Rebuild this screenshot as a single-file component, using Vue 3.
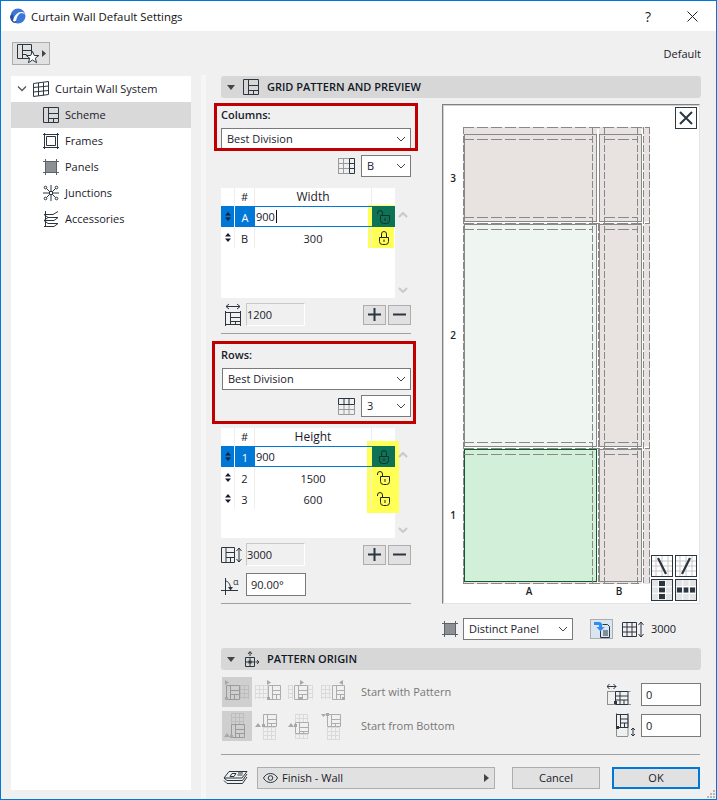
<script setup>
const columns = [
  { id: 'A', value: '900', active: true, locked: false },
  { id: 'B', value: '300', active: false, locked: true },
]
const rows = [
  { id: '1', value: '900', active: true, locked: true },
  { id: '2', value: '1500', active: false, locked: false },
  { id: '3', value: '600', active: false, locked: false },
]
const tree = [
  { name: 'Scheme', icon: 'scheme', active: true },
  { name: 'Frames', icon: 'frames' },
  { name: 'Panels', icon: 'panels' },
  { name: 'Junctions', icon: 'junctions' },
  { name: 'Accessories', icon: 'accessories' },
]

// scheme block drawn in the origin buttons
const schemePath = ([x, y, w, h]) => {
  const a = x + 0.5
  const b = y + 0.5
  return `M${a} ${b}h${w}v${h}h${-w}zM${a + 4} ${b}v${h}M${a + 4} ${b + 5}h${w - 4}M${a + 4} ${b + 9}h${w - 4}M${a + 8} ${b + 9}v${h - 9}`
}
const latticePath = (parts) => parts.map(([x, y, w, h]) => {
  let d = ''
  for (let i = 0; i <= w; i += 4) d += `M${x + i + 0.5} ${y}v${h}`
  for (let j = 0; j <= h; j += 4) d += `M${x} ${y + j + 0.5}h${w}`
  return d
}).join('')

const originTop = [
  { scheme: [4, 8, 13, 14], lattice: [[18, 8, 8, 14]], tri: 'M3 3l4 2.500L3 8z', dot: [3, 20], pressed: true },
  { scheme: [13, 8, 12, 14], lattice: [[0, 8, 12, 14]], tri: 'M12 3l4 2.500L12 8z', dot: [12, 20] },
  { scheme: [6, 8, 13, 14], lattice: [[0, 8, 5, 14], [20, 8, 4, 14]], tri: 'M12 3l4 2.500L12 8z', dot: [11, 20] },
  { scheme: [11, 8, 12, 14], lattice: [[0, 8, 10, 14]], tri: 'M22 3l-4 2.500L22 8z', dot: [21, 20] },
]
const originBottom = [
  { scheme: [9, 13, 13, 13], lattice: [[9, 2, 13, 11]], tri: 'M2 26l3-4 3 4z', dot: [8, 24], pressed: true },
  { scheme: [8, 3, 13, 12], lattice: [[8, 16, 13, 12]], tri: 'M0 16l3-4 3 4z', dot: [7, 13] },
  { scheme: [7, 11, 13, 11], lattice: [[7, 3, 13, 8], [7, 23, 13, 5]], tri: 'M0 16l3-4 3 4z', dot: [6, 13] },
  { scheme: [6, 3, 13, 12], lattice: [[6, 16, 13, 12]], tri: 'M0 3h5L2.500 6z', dot: [5, 2] },
]
</script>

<template>
  <div class="window">
    <div class="titlebar">
      <svg class="logo" width="16" height="16" viewBox="0 0 16 16">
        <circle cx="8" cy="8" r="7.500" fill="#3d76d6" />
        <path d="M0 8a8 8 0 004 7l3-1C4 12 3 10 3 6z" fill="#26509c" />
        <path d="M3 13C4 7 8 3.500 12 4c1.500.2 2.500 1.200 3 2.500-1-1-2-1.500-3-1.500-3 0-5 3-6 8-1 .6-2 .5-3 0z" fill="#fff" />
      </svg>
      <span class="title">Curtain Wall Default Settings</span>
      <span class="help">?</span>
      <svg class="close" width="11" height="11" viewBox="0 0 11 11">
        <path d="M.5.500l10 10M10.500.500l-10 10" stroke="#222" fill="none" />
      </svg>
    </div>

    <div class="toolbar">
      <button class="favorite">
        <svg width="36" height="21" viewBox="0 0 36 21">
          <path d="M4.500 1.500h14v14h-14zM9.500 1.500v14M9.500 7.500h9M9.500 11.500h4" fill="none" stroke="#2b3640" />
          <path d="M19.500 8.500l1.800 4h4.500l-3.500 2.700 1.300 4.500-4.100-2.700-4.100 2.700 1.300-4.500-3.500-2.700h4.500z" fill="#fff" stroke="#2b3640" />
          <path d="M29 7l4 3.500-4 3.500z" fill="#444" />
        </svg>
      </button>
      <span class="default">Default</span>
    </div>

    <div class="content">
      <aside class="tree">
        <div class="tree-root">
          <svg width="12" height="8" viewBox="0 0 12 8"><path d="M2 1.500l4 4 4-4" fill="none" stroke="#555" stroke-width="1.300" /></svg>
          <svg width="16" height="16" viewBox="0 0 16 16">
            <path d="M.5 2.500l15-2v13l-15 2zM.5 6.500l15-1.500M.5 11l15-1.500M5.500 2v13M10.500 1.500v13" fill="none" stroke="#2b3640" />
          </svg>
          <span>Curtain Wall System</span>
        </div>
        <div v-for="item in tree" :key="item.name" class="tree-item" :class="{ active: item.active }">
          <svg width="16" height="16" viewBox="0 0 16 16">
            <g v-if="item.icon === 'scheme'" fill="none" stroke="#2b3640">
              <path d="M.5.500h15v15H.5zM5.500.500v15M5.500 6.500h10M5.500 11.500h10M10.500 11.500v4" />
            </g>
            <g v-else-if="item.icon === 'frames'" fill="none" stroke="#2b3640">
              <path d="M1.500 1.500h13v13h-13zM3.500 3.500h9v9h-9zM1.500 0v16M14.500 0v16M0 1.500h16M0 14.500h16" />
            </g>
            <g v-else-if="item.icon === 'panels'">
              <path d="M2.500 2.500h11v11h-11z" fill="#8d9196" stroke="#2b3640" />
              <path d="M2.500 0v16M13.500 0v16M0 2.500h16M0 13.500h16" fill="none" stroke="#5b6269" />
            </g>
            <g v-else-if="item.icon === 'junctions'" fill="none" stroke="#2b3640">
              <path d="M6.500 6.500h3v3h-3zM0 8h6.500M9.500 8H16M8 0v6.500M8 9.500V16M3.500 3.500l3 3M12.500 3.500l-3 3M3.500 12.500l3-3M12.500 12.500l-3-3" />
              <circle cx="2.500" cy="2.500" r="1.300" /><circle cx="13.500" cy="2.500" r="1.300" />
              <circle cx="2.500" cy="13.500" r="1.300" /><circle cx="13.500" cy="13.500" r="1.300" />
            </g>
            <g v-else fill="none" stroke="#2b3640">
              <path d="M1 3.500h9l5-3M1 3.500l4 3h10M5 6.500L1 9.500h10l4-3M1 9.500l4 3h10L11 15.500H1M2.500 0v16" />
            </g>
          </svg>
          <span>{{ item.name }}</span>
        </div>
      </aside>

      <div class="splitter"></div>

      <main class="main">
        <div class="section-head">
          <svg class="caret" width="8" height="5" viewBox="0 0 8 5"><path d="M0 0h8L4 5z" fill="#444" /></svg>
          <svg width="16" height="16" viewBox="0 0 16 16">
            <path d="M.5.500h15v15H.5zM5.500.500v15M5.500 6.500h10M5.500 11.500h10M10.500 11.500v4" fill="none" stroke="#2b3640" />
          </svg>
          <span>GRID PATTERN AND PREVIEW</span>
        </div>

        <div class="grid-area">
          <div class="controls">
            <div class="group columns-group">
              <div class="red-box red-columns"></div>
              <label class="field-label">Columns:</label>
              <div class="select wide"><span>Best Division</span><svg width="10" height="6" viewBox="0 0 10 6"><path d="M1 1l4 4 4-4" fill="none" stroke="#444" /></svg></div>
              <div class="sub-select">
                <svg width="17" height="16" viewBox="0 0 17 16">
                  <path d="M0 .5h11M0 5.500h11M0 10.500h11M0 15.500h11M.5 0v16M5.500 0v16" fill="none" stroke="#9a9a9a" />
                  <path d="M11.500.500h5v15h-5zM11.500 5.500h5M11.500 10.500h5" fill="none" stroke="#2b3640" />
                </svg>
                <div class="select small"><span>B</span><svg width="10" height="6" viewBox="0 0 10 6"><path d="M1 1l4 4 4-4" fill="none" stroke="#444" /></svg></div>
              </div>
            </div>

            <div class="table-row">
              <div class="highlight hl-columns"></div>
              <div class="table">
                <div class="thead">
                  <div class="c-handle"></div>
                  <div class="c-id">#</div>
                  <div class="c-value head-value">Width</div>
                  <div class="c-lock"></div>
                </div>
                <div v-for="c in columns" :key="c.id" class="trow" :class="{ active: c.active }">
                  <div class="c-handle"><svg width="6" height="9" viewBox="0 0 6 9"><path d="M3 0l3 3.500H0zM3 9L0 5.500h6z" fill="currentColor" /></svg></div>
                  <div class="c-id">{{ c.id }}</div>
                  <div class="c-value"><span>{{ c.value }}</span><i v-if="c.active" class="cursor"></i></div>
                  <div class="c-lock">
                    <svg v-if="c.locked" width="12" height="14" viewBox="0 0 12 14" fill="none" stroke="currentColor">
                      <path d="M3.500 6V3a2.500 2.500 0 015 0v3M1.500 6.500h9v4a3 3 0 01-3 3h-3a3 3 0 01-3-3zM6 8.500V11" />
                    </svg>
                    <svg v-else width="13" height="14" viewBox="0 0 13 14" fill="none" stroke="currentColor">
                      <path d="M.5 4V3a2.500 2.500 0 015 0v2.500M3.500 5.500h9v5a3 3 0 01-3 3h-3a3 3 0 01-3-3zM8 8v3" />
                    </svg>
                  </div>
                </div>
              </div>
              <div class="scroller">
                <svg width="10" height="6" viewBox="0 0 10 6"><path d="M1 5l4-4 4 4" fill="none" stroke="#c9c9c9" stroke-width="2" /></svg>
                <svg width="10" height="6" viewBox="0 0 10 6"><path d="M1 1l4 4 4-4" fill="none" stroke="#c9c9c9" stroke-width="2" /></svg>
              </div>
            </div>

            <div class="total-row">
              <svg class="total-icon" width="16" height="23" viewBox="0 0 16 23">
                <path d="M1 3.500h14M4 1L1 3.500 4 6M12 1l3 2.500L12 6" fill="none" stroke="#2b3640" />
                <path d="M.5 8v15M15.500 8v15M.5 9.500h15M.5 21.500h15M5.500 9.500v12M5.500 14.500h10M5.500 18.500h10M10.500 18.500v3" fill="none" stroke="#2b3640" />
              </svg>
              <div class="readonly">1200</div>
              <div class="buttons">
                <button class="pm"><svg width="13" height="13" viewBox="0 0 13 13"><path d="M6.500 0v13M0 6.500h13" stroke="#2b3640" stroke-width="2" /></svg></button>
                <button class="pm"><svg width="13" height="13" viewBox="0 0 13 13"><path d="M0 6.500h13" stroke="#2b3640" stroke-width="2" /></svg></button>
              </div>
            </div>

            <hr class="divider" />

            <div class="group rows-group">
              <div class="red-box red-rows"></div>
              <label class="field-label">Rows:</label>
              <div class="select wide"><span>Best Division</span><svg width="10" height="6" viewBox="0 0 10 6"><path d="M1 1l4 4 4-4" fill="none" stroke="#444" /></svg></div>
              <div class="sub-select">
                <svg width="17" height="17" viewBox="0 0 17 17">
                  <path d="M.5 6.500v-6h16v6M.5 6.500h16M6 .5v6M11 .5v6" fill="none" stroke="#2b3640" />
                  <path d="M.5 7v9.500h16V7M.5 11.500h16M6 7v9.500M11 7v9.500" fill="none" stroke="#9a9a9a" />
                </svg>
                <div class="select small"><span>3</span><svg width="10" height="6" viewBox="0 0 10 6"><path d="M1 1l4 4 4-4" fill="none" stroke="#444" /></svg></div>
              </div>
            </div>

            <div class="table-row">
              <div class="highlight hl-rows"></div>
              <div class="table">
                <div class="thead">
                  <div class="c-handle"></div>
                  <div class="c-id">#</div>
                  <div class="c-value head-value">Height</div>
                  <div class="c-lock"></div>
                </div>
                <div v-for="r in rows" :key="r.id" class="trow" :class="{ active: r.active }">
                  <div class="c-handle"><svg width="6" height="9" viewBox="0 0 6 9"><path d="M3 0l3 3.500H0zM3 9L0 5.500h6z" fill="currentColor" /></svg></div>
                  <div class="c-id">{{ r.id }}</div>
                  <div class="c-value"><span>{{ r.value }}</span></div>
                  <div class="c-lock">
                    <svg v-if="r.locked" width="12" height="14" viewBox="0 0 12 14" fill="none" stroke="currentColor">
                      <path d="M3.500 6V3a2.500 2.500 0 015 0v3M1.500 6.500h9v4a3 3 0 01-3 3h-3a3 3 0 01-3-3zM6 8.500V11" />
                    </svg>
                    <svg v-else width="13" height="14" viewBox="0 0 13 14" fill="none" stroke="currentColor">
                      <path d="M.5 4V3a2.500 2.500 0 015 0v2.500M3.500 5.500h9v5a3 3 0 01-3 3h-3a3 3 0 01-3-3zM8 8v3" />
                    </svg>
                  </div>
                </div>
              </div>
              <div class="scroller">
                <svg width="10" height="6" viewBox="0 0 10 6"><path d="M1 5l4-4 4 4" fill="none" stroke="#c9c9c9" stroke-width="2" /></svg>
                <svg width="10" height="6" viewBox="0 0 10 6"><path d="M1 1l4 4 4-4" fill="none" stroke="#c9c9c9" stroke-width="2" /></svg>
              </div>
            </div>

            <div class="total-row total-height">
              <svg class="total-icon wide-icon" width="21" height="18" viewBox="0 0 21 18">
                <path d="M.5 1.500h13v15H.5zM5 1.500v15M5 6.500h8.500M5 11.500h8.500M9.500 11.500v5" fill="none" stroke="#2b3640" />
                <path d="M18 2v14M15.500 5L18 2l2.500 3M15.500 13l2.500 3 2.500-3" fill="none" stroke="#2b3640" />
              </svg>
              <div class="readonly">3000</div>
              <div class="buttons">
                <button class="pm"><svg width="13" height="13" viewBox="0 0 13 13"><path d="M6.500 0v13M0 6.500h13" stroke="#2b3640" stroke-width="2" /></svg></button>
                <button class="pm"><svg width="13" height="13" viewBox="0 0 13 13"><path d="M0 6.500h13" stroke="#2b3640" stroke-width="2" /></svg></button>
              </div>
            </div>

            <div class="angle-row">
              <svg class="total-icon wide-icon" width="21" height="20" viewBox="0 0 21 20">
                <path d="M0 15.500h17M4.500 3v17M4.500 6c3.500.5 5 4 5 8" fill="none" stroke="#2b3640" />
                <path d="M7 12l2.500 3.500L12 12z" fill="#2b3640" />
                <text x="12" y="10" class="alpha">α</text>
              </svg>
              <div class="angle-input">90.00°</div>
            </div>

            <hr class="divider" />
          </div>

          <div class="preview-col">
            <div class="preview">
              <svg class="drawing" width="256" height="498" viewBox="0 0 256 498">
                <!-- drawing coordinates are page px minus 443,105 -->
                <rect x="20" y="22" width="187" height="457" fill="#e8e2e0" />
                <path d="M155 24v455M199.500 24v455M20 117.500h187M20 342.500h187" stroke="#fff" stroke-width="2" fill="none" />
                <rect x="21.500" y="29.500" width="132" height="87" fill="#e8e2e0" stroke="#888" />
                <rect x="156.500" y="29.500" width="42" height="87" fill="#e8e2e0" stroke="#888" />
                <rect x="21.500" y="119.500" width="132" height="222" fill="#eff5f1" stroke="#888" />
                <rect x="156.500" y="119.500" width="42" height="222" fill="#e8e2e0" stroke="#888" />
                <rect x="21.500" y="344.500" width="132" height="132" fill="#d2efd9" stroke="#17582f" />
                <rect x="156.500" y="344.500" width="42" height="132" fill="#e8e2e0" stroke="#888" />
                <path d="M200.500 22v456M206.500 22v456M20.500 22v456M149.500 22v456M155.500 119v359M161.500 22v456M194.500 22v456" fill="none" stroke="#888" stroke-dasharray="7 2" />
                <path d="M20 22.500h187M20 34.500h130M161 34.500h34M20 112.500h130M161 112.500h34M20 124.500h130M161 124.500h34M20 337.500h130M161 337.500h34M20 349.500h130M161 349.500h34M20 478.500h130M146 478.500h50M20 118.500h187M20 343.500h187" fill="none" stroke="#888" stroke-dasharray="11 3" />
                <text x="10" y="77" class="axis">3</text>
                <text x="10" y="234" class="axis">2</text>
                <text x="10" y="414" class="axis">1</text>
                <text x="86" y="490" class="axis">A</text>
                <text x="176" y="490" class="axis">B</text>
              </svg>

              <button class="preview-close">
                <svg width="16" height="16" viewBox="0 0 16 16"><path d="M2 2l12 12M14 2L2 14" stroke="#2b3640" stroke-width="2" /></svg>
              </button>
              <div class="preview-tools">
                <button class="tool">
                  <svg width="20" height="20" viewBox="0 0 20 20">
                    <path d="M4 0v20M10 0v20M16 0v20M0 5h20M0 10h20M0 15h20" stroke="#c9c9c9" />
                    <path d="M6 2l8 16" stroke="#2b3640" stroke-width="2.200" />
                  </svg>
                </button>
                <button class="tool">
                  <svg width="20" height="20" viewBox="0 0 20 20">
                    <path d="M4 0v20M10 0v20M16 0v20M0 5h20M0 10h20M0 15h20" stroke="#c9c9c9" />
                    <path d="M14 2L6 18" stroke="#2b3640" stroke-width="2.200" />
                  </svg>
                </button>
                <button class="tool">
                  <svg width="20" height="20" viewBox="0 0 20 20">
                    <rect width="20" height="20" fill="#e2e4e5" />
                    <path d="M7 1h6v5H7zM7 7.500h6v5H7zM7 14h6v5H7z" fill="#2b3640" />
                    <path d="M6.500 0v20M13.500 0v20M0 6.800h20M0 13.200h20" stroke="#fff" />
                  </svg>
                </button>
                <button class="tool">
                  <svg width="20" height="20" viewBox="0 0 20 20">
                    <rect width="20" height="20" fill="#e2e4e5" />
                    <path d="M1 7.500h5v5H1zM7.500 7.500h5v5h-5zM14 7.500h5v5h-5z" fill="#2b3640" />
                    <path d="M6.800 0v20M13.200 0v20M0 6.500h20M0 13.500h20" stroke="#fff" />
                  </svg>
                </button>
              </div>
            </div>

            <div class="preview-foot">
              <svg width="16" height="16" viewBox="0 0 16 16">
                <path d="M2.500 2.500h11v11h-11z" fill="#8d9196" stroke="#2b3640" />
                <path d="M2.500 0v16M13.500 0v16M0 2.500h16M0 13.500h16" fill="none" stroke="#5b6269" />
              </svg>
              <div class="select panel-select"><span>Distinct Panel</span><svg width="10" height="6" viewBox="0 0 10 6"><path d="M1 1l4 4 4-4" fill="none" stroke="#444" /></svg></div>
              <button class="pressed">
                <svg width="18" height="17" viewBox="0 0 18 17">
                  <path d="M9.500 3.500h5l2 2v11h-9V9M10 10h5M10 12h5M10 14h5" fill="none" stroke="#2b3640" />
                  <path d="M1 1h5c2 0 3 1 3 3v2h2.500l-4 4.500-4-4.500H6V4.500c0-.3-.2-.5-.5-.5H1z" fill="#2f8cf0" />
                </svg>
              </button>
              <svg class="foot-grid" width="27" height="17" viewBox="0 0 27 17">
                <path d="M.5 1.500h14v14H.5zM5 1.500v14M10 1.500v14M.5 6h14M.5 11h14M19 1v15M16.500 4L19 1l2.500 3M16.500 13l2.500 3 2.500-3" fill="none" stroke="#2b3640" />
              </svg>
              <span class="foot-value">3000</span>
            </div>
          </div>
        </div>

        <div class="section-head second">
          <svg class="caret" width="8" height="5" viewBox="0 0 8 5"><path d="M0 0h8L4 5z" fill="#444" /></svg>
          <svg width="16" height="16" viewBox="0 0 16 16">
            <path d="M2.500 6.500h9v9h-9zM7 6.500v9M2.500 11h9M7 5V1M5 3l2-2.500L9 3M12.500 11H16M14 9l2 2-2 2" fill="none" stroke="#2b3640" />
            <rect x="5.500" y="9.500" width="3" height="3" fill="#2b3640" />
          </svg>
          <span>PATTERN ORIGIN</span>
        </div>

        <div class="origin">
          <div class="origin-lines">
            <div class="origin-row">
              <div v-for="(b, i) in originTop" :key="i" class="origin-btn" :class="{ pressed: b.pressed }">
                <svg width="30" height="30" viewBox="0 0 30 30" fill="none">
                  <path :d="latticePath(b.lattice)" class="lat" />
                  <path :d="schemePath(b.scheme)" class="sch" />
                  <path :d="b.tri" class="mark" />
                  <rect :x="b.dot[0]" :y="b.dot[1]" width="3" height="3" class="mark" />
                </svg>
              </div>
              <span class="origin-label">Start with Pattern</span>
            </div>
            <div class="origin-row">
              <div v-for="(b, i) in originBottom" :key="i" class="origin-btn" :class="{ pressed: b.pressed }">
                <svg width="30" height="30" viewBox="0 0 30 30" fill="none">
                  <path :d="latticePath(b.lattice)" class="lat" />
                  <path :d="schemePath(b.scheme)" class="sch" />
                  <path :d="b.tri" class="mark" />
                  <rect :x="b.dot[0]" :y="b.dot[1]" width="3" height="3" class="mark" />
                </svg>
              </div>
              <span class="origin-label">Start from Bottom</span>
            </div>
          </div>
          <div class="origin-fields">
            <div class="origin-field">
              <svg class="of-one" width="24" height="21" viewBox="0 0 24 21">
                <path d="M0 2.500h9M2.500 0L0 2.500 2.500 5M6.500 0L9 2.500 6.500 5" fill="none" stroke="#2b3640" />
                <path d="M.5 7v14M.5 7.500h8M.5 20.500h8M23.500 7.500H21M21 20.500h3" fill="none" stroke="#8a8f94" />
                <path d="M8.500 7.500h12.500v13H8.500zM8.500 12h12.500M8.500 16h12.500M13 7.500v13M17 16v4.500" fill="none" stroke="#2b3640" />
                <rect x="7" y="17" width="3" height="3" fill="#2b3640" />
              </svg>
              <div class="num-input">0</div>
            </div>
            <div class="origin-field">
              <svg class="of-two" width="21" height="24" viewBox="0 0 21 24">
                <path d="M.5 0v23M12 0v23M.5 23.500H12" fill="none" stroke="#8a8f94" />
                <path d="M.5 1.500H12v13H.5zM4.500 1.500v13M4.500 6H12M4.500 10H12M8.500 10v4.500" fill="none" stroke="#2b3640" />
                <rect x="0" y="13" width="3" height="3" fill="#2b3640" />
                <path d="M17 15v8M15 17l2-2 2 2M15 21l2 2 2-2" fill="none" stroke="#2b3640" />
              </svg>
              <div class="num-input">0</div>
            </div>
          </div>
        </div>

        <hr class="divider full" />

        <div class="footer">
          <svg width="25" height="14" viewBox="0 0 25 14">
            <path d="M6 .500h18L19 7H1zM1 7l3 2.500h15.500L24 3M1 9.500l3 3h15.500L24 6M9 2.500h4l-2 3H7zM15 2h5M14.500 4h5" fill="none" stroke="#2b3640" />
          </svg>
          <div class="layer">
            <svg width="15" height="10" viewBox="0 0 15 10">
              <path d="M.5 5c1.500-3 4-4.500 7-4.500s5.500 1.500 7 4.500c-1.500 3-4 4.500-7 4.500S2 8 .5 5z" fill="none" stroke="#2b3640" />
              <circle cx="7.500" cy="5" r="2.300" fill="none" stroke="#2b3640" />
            </svg>
            <span>Finish - Wall</span>
            <svg class="layer-arrow" width="5" height="8" viewBox="0 0 5 8"><path d="M0 0l5 4-5 4z" fill="#444" /></svg>
          </div>
          <button class="action">Cancel</button>
          <button class="action ok">OK</button>
        </div>
      </main>
    </div>
    <svg class="grip" width="10" height="10" viewBox="0 0 10 10">
      <path d="M7 1h2v2H7zM4 4h2v2H4zM7 4h2v2H7zM1 7h2v2H1zM4 7h2v2H4zM7 7h2v2H7z" fill="#b8b8b8" />
    </svg>
  </div>
</template>

<style>
html, body { margin: 0; padding: 0; background: #f0f0f0; }
</style>

<style scoped>
.window {
  position: relative;
  width: 717px;
  height: 800px;
  box-sizing: border-box;
  border: 1px solid #0078d7;
  background: #f0f0f0;
  font-family: "Open Sans", "Noto Sans", sans-serif;
  font-size: 11px;
  color: #1a1a2a;
  overflow: hidden;
}
button { font: inherit; color: inherit; padding: 0; margin: 0; }
svg { display: block; flex: none; }

.titlebar {
  display: flex;
  align-items: center;
  height: 30px;
  background: #fff;
  padding-left: 9px;
}
.title { margin-left: 5px; font-size: 11.400px; flex: 1; color: #111; }
.help { font-size: 14px; margin-right: 36px; color: #222; }
.close { margin-right: 18px; }

.toolbar {
  display: flex;
  align-items: center;
  justify-content: space-between;
  padding: 11px 15px 0 11px;
  height: 23px;
}
.favorite {
  width: 38px;
  height: 23px;
  border: 1px solid #adadad;
  background: #e1e1e1;
  display: flex;
  align-items: center;
  justify-content: center;
}

.content {
  display: flex;
  margin-top: 11px;
  padding-left: 10px;
}
.tree {
  width: 180px;
  height: 714px;
  background: #fff;
  flex: none;
}
.splitter {
  width: 5px;
  height: 724px;
  margin: -1px 0 0 10px;
  background: #f6f6f6;
  flex: none;
}
.tree-root, .tree-item {
  display: flex;
  align-items: center;
  height: 26px;
  padding-bottom: 2px;
  box-sizing: border-box;
}
.tree-root { padding-left: 5px; gap: 5px; }
.tree-root span { margin-left: 1px; }
.tree-item { padding-left: 32px; gap: 6px; }
.tree-item svg { margin-top: 2px; }
.tree-root svg { margin-top: 2px; }
.tree-item.active { background: #d9d9d9; }

.main {
  width: 480px;
  margin-left: 15px;
}
.section-head {
  display: flex;
  align-items: center;
  height: 22px;
  box-sizing: border-box;
  padding: 0 0 2px 6px;
  background: #d7d7d7;
  border-radius: 3px;
  font-weight: 600;
  font-size: 11px;
  color: #111827;
}
.section-head svg { margin-top: 2px; }
.section-head .caret { margin-right: 8px; }
.section-head span { margin-left: 8px; }

.grid-area {
  display: flex;
  margin-top: 6px;
}
.controls { width: 190px; flex: none; }
.group { position: relative; }
.red-box {
  position: absolute;
  border: 3px solid #c00000;
  box-sizing: border-box;
  width: 204px;
  pointer-events: none;
  z-index: 2;
}
.red-columns { left: -7px; top: -1px; height: 48px; }
.red-rows { left: -9px; top: -1px; height: 83px; }
.field-label { display: block; height: 24px; padding-top: 3px; box-sizing: border-box; font-weight: 600; line-height: 16px; }
.rows-group .field-label { height: 26px; padding-top: 5px; }
.columns-group { height: 84px; }
.rows-group { height: 86px; margin-top: 8px; }
.select {
  display: flex;
  align-items: center;
  justify-content: space-between;
  box-sizing: border-box;
  height: 22px;
  border: 1px solid #7a7a7a;
  background: #fff;
  padding: 0 4px 2px 5px;
}
.select svg { margin-top: 2px; }
.wide { width: 190px; }
.rows-group .wide { width: 189px; margin-left: 1px; }
.small { width: 50px; }
.sub-select {
  display: flex;
  align-items: center;
  justify-content: flex-end;
  gap: 6px;
  margin-top: 5px;
}

.table-row { position: relative; display: flex; height: 110px; }
.highlight { position: absolute; background: #ffff55; }
.hl-columns { left: 147px; top: 17px; width: 26px; height: 43px; }
.hl-rows { left: 146px; top: 13px; width: 32px; height: 72px; }
.table {
  width: 174px;
  background: #fff;
  flex: none;
}
.thead, .trow { display: flex; position: relative; }
.thead { height: 18px; line-height: 18px; }
.trow { height: 21px; }
.c-handle, .c-id, .c-value, .c-lock { display: flex; align-items: center; justify-content: center; box-sizing: border-box; }
.c-handle { width: 14px; border-right: 1px solid #eee; }
.c-id { width: 20px; border-right: 1px solid #eee; }
.c-value { width: 117px; border-right: 1px solid #eee; }
.c-lock { width: 23px; position: relative; z-index: 1; color: #222; }
.head-value { font-size: 12px; }
.trow .c-id, .trow .c-value { padding-top: 1px; }
.trow.active .c-handle, .trow.active .c-id { background: #0078d7; color: #fff; border: none; }
.trow.active .c-handle { border-right: 1px solid #fff; color: #10233b; }
.trow.active .c-value {
  justify-content: flex-start;
  padding: 0 0 0 1px;
  border-top: 1px solid #0078d7;
  border-bottom: 1px solid #0078d7;
  border-right: none;
}
.trow.active .c-lock { background: #0d7355; color: #16302a; }
.cursor { display: inline-block; width: 1px; height: 13px; background: #111; margin-left: 1px; }
.scroller {
  display: flex;
  flex-direction: column;
  justify-content: space-between;
  box-sizing: border-box;
  margin-left: 3px;
  height: 105px;
  padding-top: 24px;
  position: relative;
}

.total-row {
  display: flex;
  align-items: center;
  height: 23px;
  margin-top: 5px;
}
.total-icon { margin-left: 4px; }
.total-icon.wide-icon { margin-left: 0; }
.readonly {
  margin-left: 5px;
  width: 59px;
  height: 23px;
  box-sizing: border-box;
  border: 1px solid;
  border-color: #c8c8c8 #fff #fff #c8c8c8;
  line-height: 21px;
}
.total-height .readonly { margin-left: 4px; }
.buttons { display: flex; gap: 2px; margin-left: auto; }
.pm {
  width: 23px;
  height: 20px;
  border: 1px solid #adadad;
  background: #e1e1e1;
  display: flex;
  align-items: center;
  justify-content: center;
}
.divider { border: none; border-top: 1px solid #a0a0a0; margin: 7px 0 0; }
.divider.full { width: 479px; margin-top: 12px; }
.angle-row { display: flex; align-items: center; margin-top: 7px; }
.angle-input {
  margin-left: 4px;
  width: 60px;
  height: 23px;
  box-sizing: border-box;
  border: 1px solid #7a7a7a;
  background: #fff;
  line-height: 21px;
  padding-left: 4px;
}
.alpha { font-size: 9px; fill: #2b3640; }

.preview-col { margin-left: 31px; width: 258px; flex: none; }
.preview {
  position: relative;
  width: 258px;
  height: 500px;
  box-sizing: border-box;
  background: #fff;
  border: 1px solid;
  border-color: #808080 #e3e3e3 #e3e3e3 #808080;
  box-shadow: inset 1px 1px #d0d0d0;
}
.drawing { position: absolute; left: 0; top: 0; }
.axis { font-size: 10px; font-weight: 600; fill: #222; text-anchor: middle; }
.preview-close {
  position: absolute;
  top: 2px;
  right: 2px;
  width: 22px;
  height: 22px;
  border: 1px solid #2b3640;
  background: #fff;
  display: flex;
  align-items: center;
  justify-content: center;
}
.preview-tools {
  position: absolute;
  right: 2px;
  bottom: 2px;
  display: grid;
  grid-template-columns: 22px 22px;
  grid-auto-rows: 22px;
  gap: 2px;
}
.tool {
  width: 22px;
  height: 22px;
  border: 1px solid #2b3640;
  background: #fff;
}
.preview-foot {
  display: flex;
  align-items: center;
  margin-top: 14px;
  height: 22px;
}
.panel-select { width: 110px; margin-left: 5px; }
.preview-foot .pressed {
  width: 23px;
  height: 20px;
  margin-left: 17px;
  border: 1px solid #adadad;
  background: #d9e5f0;
  display: flex;
  align-items: center;
  justify-content: center;
}
.foot-grid { margin-left: 9px; }
.foot-value { margin-left: 2px; margin-bottom: 2px; }

.second { margin-top: 8px; }
.origin { display: flex; justify-content: space-between; margin-top: 7px; height: 65px; }
.origin-lines { display: flex; flex-direction: column; gap: 4px; margin-left: 1px; }
.origin-row { display: flex; align-items: center; gap: 3px; height: 30px; }
.origin-btn { width: 30px; height: 30px; }
.origin-btn.pressed { background: #cfcfcf; }
.lat { stroke: #dadada; }
.sch { stroke: #adadad; }
.mark { fill: #a8a8a8; }
.origin-btn.pressed .lat { stroke: #bdbdbd; }
.origin-btn.pressed .sch { stroke: #9a9a9a; }
.origin-label { margin-left: 7px; padding-bottom: 2px; color: #777; }
.origin-fields { display: flex; flex-direction: column; gap: 7px; padding-top: 6px; }
.origin-field { display: flex; align-items: center; justify-content: flex-end; }
.of-one { margin-right: 10px; }
.of-two { margin-right: 4px; }
.num-input {
  width: 60px;
  height: 23px;
  box-sizing: border-box;
  border: 1px solid #7a7a7a;
  background: #fff;
  line-height: 21px;
  padding-left: 4px;
}
.footer {
  display: flex;
  align-items: center;
  margin-top: 12px;
  height: 22px;
  padding-left: 2px;
}
.layer {
  display: flex;
  align-items: center;
  box-sizing: border-box;
  width: 238px;
  height: 22px;
  margin-left: 9px;
  border: 1px solid #adadad;
  background: #e1e1e1;
  padding: 0 5px;
  gap: 4px;
}
.layer span { padding-bottom: 2px; }
.layer-arrow { margin-left: auto; }
.action {
  width: 88px;
  height: 22px;
  margin-left: 17px;
  border: 1px solid #adadad;
  background: #e1e1e1;
  padding-bottom: 2px;
}
.ok {
  margin-left: 12px;
  border: 2px solid #0078d7;
}
.grip { position: absolute; right: 0; bottom: 0; }
</style>
